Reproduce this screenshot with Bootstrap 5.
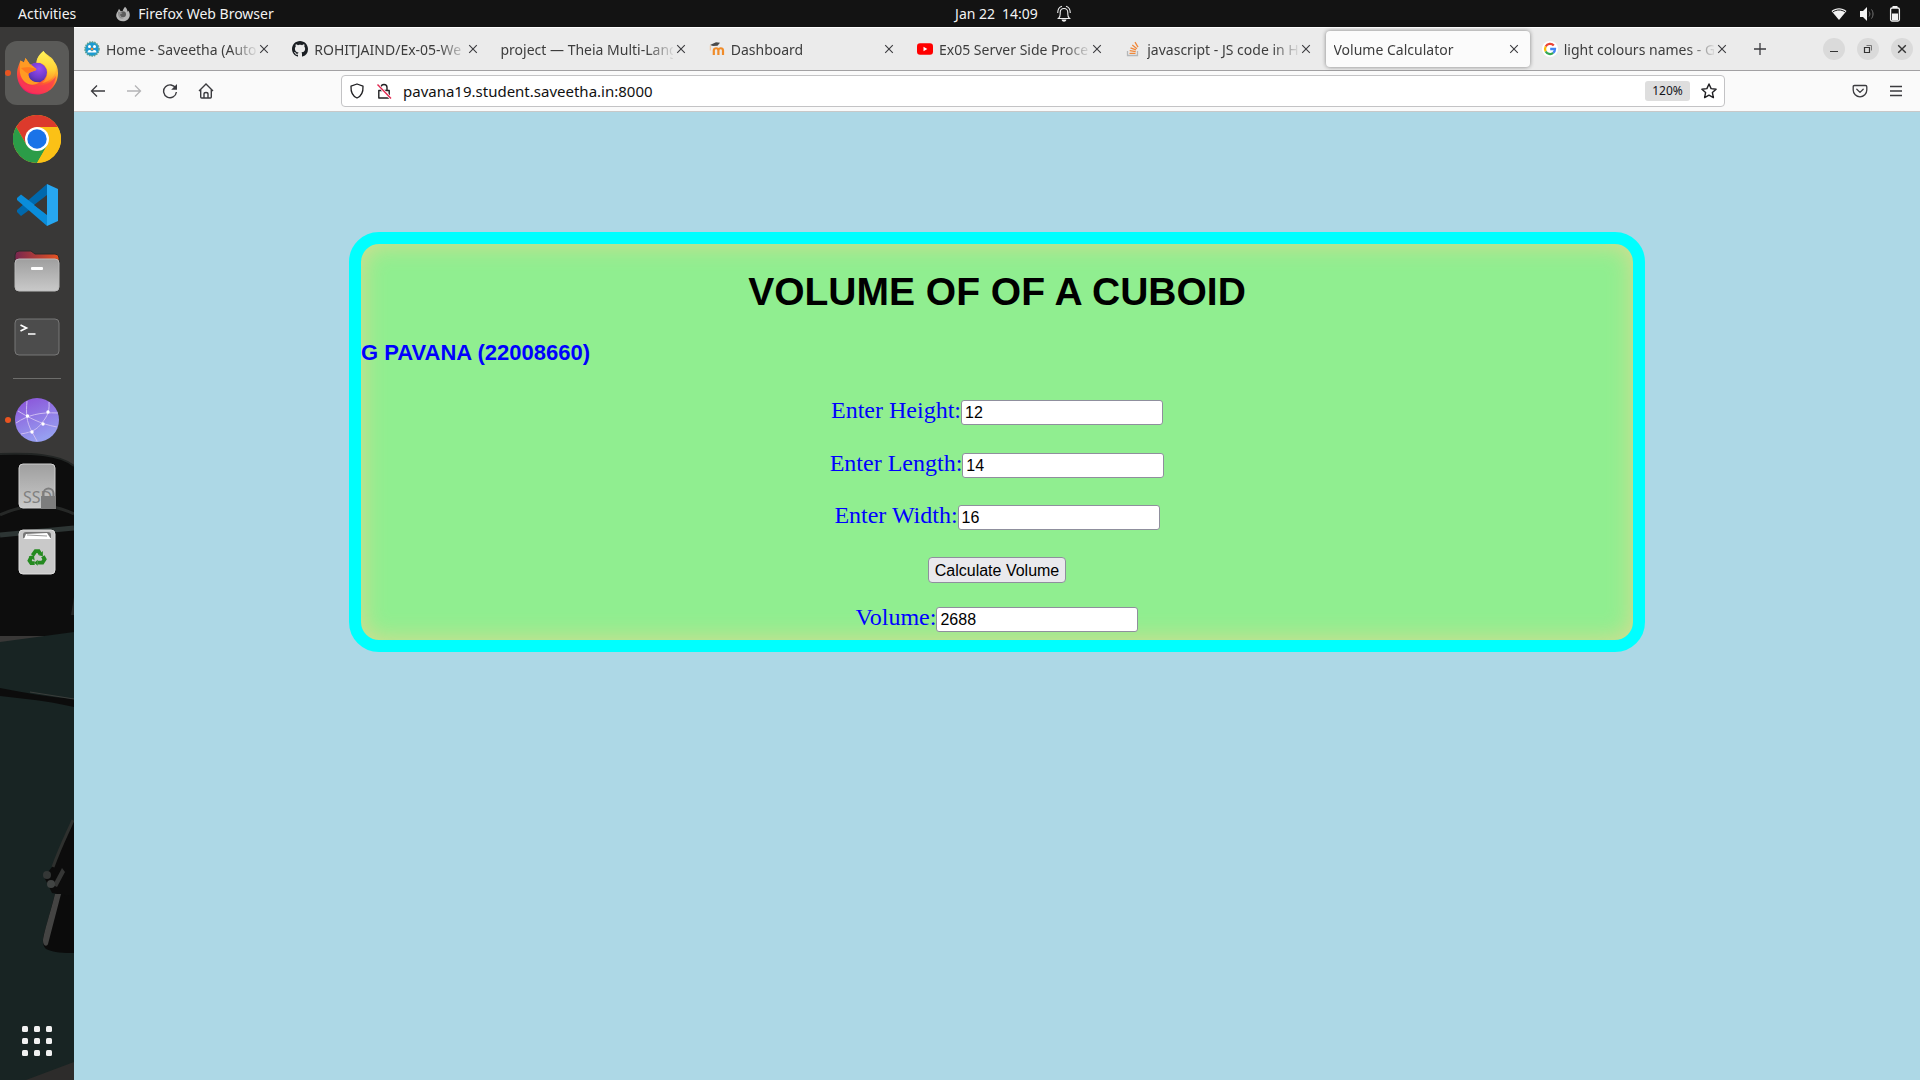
<!DOCTYPE html>
<html lang="en">
<head>
<meta charset="utf-8">
<meta name="viewport" content="width=device-width, initial-scale=1">
<title>Volume Calculator</title>
<link href="https://cdn.jsdelivr.net/npm/bootstrap@5.3.0/dist/css/bootstrap.min.css" rel="stylesheet">
<style>
  body { font-family: "Noto Sans", "Open Sans", sans-serif; font-size: 14px; line-height: 20px; background: #add8e6; }
  svg { display: block; flex: none; }
  button { border: 0; padding: 0; background: none; color: inherit; }

  /* system bar */
  .sysbar { height: 27px; background: #131313; color: #f2f2f2; }
  .sys-left { flex: 1 0 74px; gap: 40px; padding-left: 18px; }
  .sys-mid { gap: 18px; padding-left: 50px; }
  .sys-right { flex: 1 0 0; gap: 12px; padding-right: 17px; }

  /* dock */
  .dock { width: 74px; background: #393837; overflow: hidden; }
  .wallpaper { position: absolute; inset: 0; }
  .dock-items { padding: 13px 0 6px; }
  .dock-item { width: 74px; height: 66px; display: flex; align-items: center; justify-content: center; position: relative; }
  .dock-item.running::before { content: ""; position: absolute; left: 5px; top: 30px; width: 6px; height: 6px; border-radius: 50%; background: #e95420; z-index: 1; }
  .dock-tile { width: 64px; height: 64px; border-radius: 12px; background: #5a5a58; display: flex; align-items: center; justify-content: center; }
  .dock-rule { width: 48px; height: 1px; margin: 8px 0; background: #6d6d6b; }

  /* browser chrome */
  .tabstrip { height: 44px; background: #ebebeb; border-top: 1px solid #fff; border-bottom: 1px solid #a2a1a3; }
  .tab-box { flex: 1 1 0; min-width: 0; height: 36px; margin: 0 2px; padding: 0 8px; border-radius: 4px; color: #3d3d3d; }
  .tab-box > svg { margin-right: 6px; }
  .tab-box.current { background: #fbfbfb; box-shadow: 0 0 4px rgba(0,0,0,.45); }
  .tab-title { flex: 1 1 0; min-width: 0; padding-top: 2px; overflow: hidden; white-space: nowrap; color: inherit; text-decoration: none;
    -webkit-mask-image: linear-gradient(to left, rgba(0,0,0,.1), #000 26px); mask-image: linear-gradient(to left, rgba(0,0,0,.1), #000 26px); }
  .strip-end { width: 180px; padding: 0 7px 0 12px; }
  .win-btns { gap: 12px; }
  .win-btn { width: 22px; height: 22px; border-radius: 50%; background: #dadada; display: flex; align-items: center; justify-content: center; }
  .toolbar { height: 41px; padding: 0 6px; background: #fafafa; border-bottom: 1px solid #c8c8c8; color: #3b3b3f; }
  .tool-btn { width: 36px; height: 32px; display: flex; align-items: center; justify-content: center; flex: none; }
  .tool-gap { width: 117px; flex-shrink: 1; }
  .urlbar { height: 32px; padding: 0 7px; gap: 11px; border: 1px solid #c3c3c5; border-radius: 4px; background: #fff; color: #1f1f22; }
  .urlbar input { border: 0; outline: 0; padding: 0; background: none; color: #111; min-width: 0; font-size: 15px; }
  .zoom-level { width: 45px; height: 20px; border-radius: 3px; background: #dedede; font-size: 12px; line-height: 20px; color: #15141a; }

  /* page */
  .page { background: #add8e6; padding: 120px 24px 24px; }
  .cuboid { max-width: 1296px; padding: 26px 0 9px; border: 12px solid #0ff; border-radius: 30px; background: #90ee90; box-shadow: inset 0 0 24px #e0da90; }
  .cuboid h1 { font: bold 39px/44px "Liberation Sans", Arial, sans-serif; color: #000; margin: 0 0 26px; }
  .cuboid h2 { font: bold 22px/26px "Liberation Sans", Arial, sans-serif; color: #00f; margin: 0 0 30px; }
  .calc-row { height: 28px; margin-bottom: 24px; font: 24px/28px "Liberation Serif", "Times New Roman", serif; color: #00f; }
  .calc-row:first-child { margin-bottom: 25px; }
  .calc-row.calc-action { height: 34px; margin-bottom: 16px; }
  .calc-row:last-child { margin-bottom: 0; }
  .calc-row input { width: 202px; height: 25px; padding: 2px 3px 0; border: 1px solid #8f8f9d; border-radius: 3px; background: #fff; }
  .calc-row input, .calc-row button { font: 16px/20px "Liberation Sans", Arial, sans-serif; color: #000; }
  .calc-row button { height: 26px; padding: 1px 6px 0; border: 1px solid #8f8f9d; border-radius: 4px; background: #e9e9ed; }
</style>
<script src="https://cdn.jsdelivr.net/npm/bootstrap@5.3.0/dist/js/bootstrap.bundle.min.js"></script>
</head>
<body class="d-flex flex-column min-vh-100">

<svg width="0" height="0" class="position-absolute" aria-hidden="true">
  <defs>
    <symbol id="x" viewBox="0 0 16 16"><path d="M4.200 4.200l7.600 7.600M11.800 4.200l-7.600 7.600" stroke="#3b3b3f" stroke-width="1.100" fill="none"/></symbol>
    <linearGradient id="ffBody" x1=".8" y1="0" x2=".3" y2="1"><stop offset="0" stop-color="#fff04f"/><stop offset=".35" stop-color="#ffb52e"/><stop offset=".62" stop-color="#ff5f2e"/><stop offset="1" stop-color="#f0136b"/></linearGradient>
    <radialGradient id="ffOrb" cx=".6" cy=".3" r=".8"><stop offset="0" stop-color="#9a4cf2"/><stop offset=".6" stop-color="#6d39c8"/><stop offset="1" stop-color="#3d2d92"/></radialGradient>
    <linearGradient id="ffFlame" x1=".5" y1="0" x2=".5" y2="1"><stop offset="0" stop-color="#fff45a"/><stop offset=".6" stop-color="#ffd035"/><stop offset="1" stop-color="#ff8a27"/></linearGradient>
    <linearGradient id="grey" x1="0" y1="0" x2="0" y2="1"><stop offset="0" stop-color="#9f9f9f"/><stop offset="1" stop-color="#c9c9c9"/></linearGradient>
    <linearGradient id="folder" x1="0" y1="0" x2="1" y2="0"><stop offset="0" stop-color="#77264f"/><stop offset="1" stop-color="#e65321"/></linearGradient>
    <linearGradient id="web" x1="0" y1="0" x2=".4" y2="1"><stop offset="0" stop-color="#8a4fd8"/><stop offset="1" stop-color="#969ef0"/></linearGradient>
  </defs>
</svg>

<header class="sysbar d-flex align-items-center">
  <div class="sys-left d-flex align-items-center">
    <button type="button">Activities</button>
    <div class="d-flex align-items-center gap-2">
      <svg width="14" height="16" viewBox="0 0 42 44"><path d="M27 0c-4 6-6 8-6 12L14 14 9 6 6 13C1 19 0 25 1 30c3 9 11 14 20 14s18-6 20-15c1-6 0-12-4-17l-2 3C34 8 31 3 27 0z" fill="#b5b5b5"/><circle cx="21" cy="23" r="9" fill="#5c5c5c"/><path d="M6 15c5 0 9 1 14 4-4 5-9 3-9 6 1 6 8 9 13 8-8 7-20-1-18-18z" fill="#8e8e8e"/></svg>
      <button type="button">Firefox Web Browser</button>
    </div>
  </div>
  <div class="sys-mid d-flex align-items-center">
    <span>Jan 22&ensp;14:09</span>
    <svg width="16" height="18" viewBox="0 0 16 18" fill="none" stroke="#eee" stroke-width="1.100"><path d="M2.500 13.500h11c-1.300-1-1.700-2.500-1.700-4.500V7.500C11.800 5 10.300 3.500 8 3.500S4.200 5 4.200 7.500V9c0 2-.4 3.500-1.700 4.500z"/><path d="M1.700 8C1.700 4.500 3 2 6 1.200M14.300 8C14.300 4.500 13 2 10 1.200"/><path d="M6.200 15h3.600c-.3 1.500-3.300 1.500-3.600 0z" fill="#eee"/></svg>
  </div>
  <div class="sys-right d-flex align-items-center justify-content-end">
    <svg width="16" height="16" viewBox="0 0 16 16"><path d="M.5 5C5 1.400 11 1.400 15.500 5L8 14z" fill="#f2f2f2"/><path d="M1.800 6c4-2.700 8.400-2.700 12.400 0" stroke="#131313" fill="none"/></svg>
    <svg width="16" height="16" viewBox="0 0 16 16"><path d="M1 5h3l4-4v14l-4-4H1z" fill="#f2f2f2"/><path d="M10 5.500c1.200 1.500 1.200 3.500 0 5M12.500 3.500c2 2.500 2 6.500 0 9" stroke="#777" fill="none"/></svg>
    <svg width="16" height="16" viewBox="0 0 16 16"><path d="M5.500 0h5v2h-5z" fill="#f2f2f2"/><rect x="3.600" y="2" width="8.800" height="13" rx="1.500" fill="none" stroke="#f2f2f2" stroke-width="1.300"/><path d="M5 7.500h6V14H5z" fill="#f2f2f2"/></svg>
  </div>
</header>

<div class="d-flex flex-grow-1">
  <nav class="dock position-relative flex-shrink-0" aria-label="Dock">
    <svg class="wallpaper" width="74" height="1053" viewBox="0 27 74 1053">
      <rect y="27" width="74" height="430" fill="#393837"/>
      <path d="M0 454c30-1 60 0 74 12v170H0z" fill="#0d0d0d"/>
      <path d="M0 454c30-1 60 0 74 12" stroke="#222524" stroke-width="2" fill="none"/>
      <path d="M0 515c25-12 52-12 74-1" stroke="#262827" stroke-width="3" fill="none"/>
      <path d="M0 535l74-7" stroke="#2d3534" stroke-width="5"/>
      <path d="M74 597v18l-3 0z" fill="#252525"/>
      <path d="M0 642l74-10v448H0z" fill="#182423"/>
      <path d="M0 688c25 5 50 9 74 11v8c-30-7-50-8-74-11z" fill="#0c0c0c"/>
      <path d="M30 692l44 7" stroke="#3b3e3c"/>
      <path d="M74 820c-6 14-13 27-22 47l-8 10 8 16 22 4z" fill="#0c0c0c"/>
      <path d="M73 820c-6 14-12 25-20 47" stroke="#2e302e" stroke-width="3" fill="none"/>
      <path d="M62 868l3 4-8 15-4-2z" fill="#353635"/>
      <circle cx="47" cy="875" r="4" fill="#343736"/><circle cx="51" cy="884" r="4" fill="#414443"/>
      <path d="M55 894l19 2v57c-10 0-20 0-28-4-3-3-4-8-2-15z" fill="#0b0b0b"/>
      <path d="M55 894h6l-13 50c-1 3-5 2-5-3 0-6 7-27 12-47z" fill="#444443"/>
      <path d="M26 1080l48-18v18z" fill="#2d2c2b"/>
    </svg>
    <div class="dock-items position-relative d-flex flex-column align-items-center h-100">
      <button type="button" class="dock-item running" aria-label="Firefox"><span class="dock-tile">
        <svg width="42" height="44" viewBox="0 0 42 44">
          <path d="M27.500 0C23 4 20.500 8 20.500 12L14 13.500 9.500 7 8 11.500 4.500 9.500C3 13 2.500 15 1.500 18-1 30 6 43.500 21 43.500 33 43.500 42 34 42 22c0-5-1.500-9-4-11.500C37 6 31 5 27.500 0z" fill="url(#ffBody)"/>
          <circle cx="21" cy="21.500" r="10" fill="url(#ffOrb)"/>
          <path d="M27.500 0C22.500 4 20.500 8 20.500 12c5-1 9 2 10.500 6 1.500 6-1 11-5 14 8-1 14-7 14-15 0-3-1-5-2.500-7C34 7 30 5 27.500 0z" fill="url(#ffFlame)"/>
          <path d="M4.500 9.500L8 11.500 9.500 7 14 13.500c3 .5 4 3 6.500 4.500-1 3-7 2-8 5 0 6 6 9 11 8C17 37 6 33 4 22c-.6-4 0-8 .5-12.500z" fill="#ff9a23"/>
          <path d="M5 17c5-1 10-1 15.500 1-1 3-7 2-8 5C9 21 7 19 5 17z" fill="#ff7a1f"/>
          <path d="M2 24c2 8 9 11 15 11 8 1 18-2 23-10-1 10-9 17.500-19 17.500S3 36 2 24z" fill="#fb3a52" opacity=".7"/>
        </svg></span></button>
      <button type="button" class="dock-item" aria-label="Chrome">
        <svg width="48" height="48" viewBox="0 0 48 48"><circle cx="24" cy="24" r="24" fill="#fbc116"/><path d="M3.200 12a24 24 0 0 1 41.600 0H24L13.600 30z" fill="#dc3a2c"/><path d="M3.200 12a24 24 0 0 0 20.800 36l10.400-18-20.800 0z" fill="#2b9c48"/><path d="M24 12h20.800A24 24 0 0 1 24 48l10.400-18z" fill="#fbc116"/><circle cx="24" cy="24" r="12" fill="#fff"/><circle cx="24" cy="24" r="9.700" fill="#1a73e8"/></svg></button>
      <button type="button" class="dock-item" aria-label="Visual Studio Code">
        <svg width="42" height="42" viewBox="0 0 42 42"><path d="M1 28l4 4 26-19V0L1 26z" fill="#0068ac"/><path d="M1 14l4-3.500 26 20V42L1 16z" fill="#0a8ddb"/><path d="M31 0l11 5v32l-11 5z" fill="#27a7f1"/><path d="M31 11v20L18 21z" fill="#393837"/></svg></button>
      <button type="button" class="dock-item" aria-label="Files">
        <svg width="46" height="42" viewBox="0 0 46 42"><path d="M1 5q0-4 4-4h12l4 3h20q4 0 4 4v14H1z" fill="url(#folder)" stroke="#2a2a2a"/><rect x="1" y="9" width="44" height="32" rx="4" fill="url(#grey)" stroke="#bbb"/><rect x="17" y="17" width="12" height="3" rx="1" fill="#fff"/></svg></button>
      <button type="button" class="dock-item" aria-label="Terminal">
        <svg width="46" height="38" viewBox="0 0 46 38"><rect x="1" y="1" width="44" height="36" rx="4" fill="#4c4c4c" stroke="#777"/><path d="M6.500 7l6 3-6 3" stroke="#fff" stroke-width="1.700" fill="none"/><path d="M14 16h7.500" stroke="#fff" stroke-width="1.500"/></svg></button>
      <div class="dock-rule flex-shrink-0"></div>
      <button type="button" class="dock-item running" aria-label="Web">
        <svg width="46" height="46" viewBox="0 0 46 46"><circle cx="23" cy="23" r="22" fill="url(#web)"/><g stroke="#cdbcf2" fill="none"><path d="M13 4c-1 12-1 20 5 31l5 9M35 5c1 12-4 17-8 22-4 5-8 8-20 10M2 26c12-8 24-11 42-10M4 14c10 6 22 13 39 16"/></g><g fill="#fff"><circle cx="13.500" cy="19" r="1.700"/><circle cx="34" cy="15" r="1.700"/><circle cx="29" cy="27" r="1.700"/><circle cx="18" cy="35" r="1.700"/></g></svg></button>
      <button type="button" class="dock-item" aria-label="SSD drive">
        <svg width="42" height="46" viewBox="0 0 42 46"><rect x="3" y="1" width="36" height="44" rx="4" fill="url(#grey)" stroke="#d0d0d0"/><text x="7" y="39.500" font-family="Noto Sans, sans-serif" font-size="16" fill="#808080">SSD</text><rect x="25" y="33" width="15" height="13" fill="#7d7d7d"/><path d="M27.500 34v-3.500a5 5 0 0 1 10 0V34" stroke="#7d7d7d" stroke-width="2" fill="none"/></svg></button>
      <button type="button" class="dock-item" aria-label="Rubbish bin">
        <svg width="38" height="46" viewBox="0 0 38 46"><rect x="1" y="1" width="36" height="44" rx="4" fill="#c9c9c9" stroke="#dedede"/><path d="M5 9V6q0-3 3-3h22q3 0 3 3v3z" fill="#777"/><path d="M6 10l2-5 21-1 4 6z" fill="#fff"/><path d="M9 6l20 1" stroke="#999"/><g transform="translate(2.500 4) scale(.86)"><g fill="none" stroke="#258a20" stroke-width="4.500"><path d="M14 26l3.500-5h3.500l2 3.500"/><path d="M26 27l2 3.500-2.500 4H20"/><path d="M16.500 35h-4l-2-3 2-4"/></g><path d="M21 26l5 1V21zM20 31v7l-4-3.500zM9.500 27l6-1 1 6z" fill="#258a20"/></g></svg></button>
      <button type="button" class="dock-item mt-auto" aria-label="Show applications">
        <svg width="30" height="30" viewBox="0 0 30 30" fill="#f1f1f1"><rect width="6" height="6" rx="1.500"/><rect x="12" width="6" height="6" rx="1.500"/><rect x="24" width="6" height="6" rx="1.500"/><rect y="12" width="6" height="6" rx="1.500"/><rect x="12" y="12" width="6" height="6" rx="1.500"/><rect x="24" y="12" width="6" height="6" rx="1.500"/><rect y="24" width="6" height="6" rx="1.500"/><rect x="12" y="24" width="6" height="6" rx="1.500"/><rect x="24" y="24" width="6" height="6" rx="1.500"/></svg></button>
    </div>
  </nav>

  <div class="d-flex flex-column flex-grow-1 overflow-hidden">
    <div class="tabstrip d-flex align-items-center">
      <div class="d-flex flex-grow-1 h-100 align-items-center">
        <div class="tab-box d-flex align-items-center">
          <svg width="16" height="16" viewBox="0 0 16 16"><circle cx="8" cy="8" r="7" fill="#1d9bd1" stroke="#5f9f8c" stroke-width="1.600" stroke-dasharray="1.500 1"/><circle cx="5.500" cy="5.500" r="1.500" fill="#fff"/><circle cx="10.500" cy="5.500" r="1.500" fill="#fff"/><path d="M3.500 11.500c.5-3 2.500-3 4.500-1 2-2 4-2 4.500 1z" fill="#fff"/><circle cx="8" cy="8" r="1.300" fill="#e48a3c"/></svg>
          <a href="#" class="tab-title">Home - Saveetha (Auto</a>
          <button type="button" aria-label="Close tab"><svg width="16" height="16"><use href="#x"/></svg></button>
        </div>
        <div class="tab-box d-flex align-items-center">
          <svg width="16" height="16" viewBox="0 0 16 16" fill="#1b1f23"><path d="M8 0C3.580 0 0 3.580 0 8c0 3.540 2.290 6.530 5.470 7.590.4.070.55-.17.55-.38 0-.19-.01-.82-.01-1.490-2.010.37-2.530-.49-2.690-.94-.09-.23-.48-.94-.82-1.130-.28-.15-.68-.52-.01-.53.63-.01 1.080.58 1.230.82.72 1.210 1.870.87 2.330.66.070-.52.28-.87.51-1.070-1.780-.2-3.640-.89-3.640-3.950 0-.87.31-1.590.82-2.150-.08-.2-.36-1.020.08-2.120 0 0 .67-.21 2.200.82.64-.18 1.320-.27 2-.27s1.360.09 2 .27c1.530-1.040 2.200-.82 2.200-.82.44 1.100.16 1.920.08 2.120.51.56.82 1.270.82 2.150 0 3.070-1.870 3.750-3.650 3.950.29.25.54.73.54 1.480 0 1.070-.01 1.930-.01 2.200 0 .21.15.46.55.38A8.010 8.010 0 0 0 16 8c0-4.420-3.580-8-8-8z"/></svg>
          <a href="#" class="tab-title">ROHITJAIND/Ex-05-We</a>
          <button type="button" aria-label="Close tab"><svg width="16" height="16"><use href="#x"/></svg></button>
        </div>
        <div class="tab-box d-flex align-items-center">
          <a href="#" class="tab-title">project — Theia Multi-Lang</a>
          <button type="button" aria-label="Close tab"><svg width="16" height="16"><use href="#x"/></svg></button>
        </div>
        <div class="tab-box d-flex align-items-center">
          <svg width="16" height="16" viewBox="0 0 16 16" fill="none"><path d="M4.800 14V9M4.800 9.500c0-3 4.600-3 4.600 0V14M9.400 9.500c0-3 4.600-3 4.600 0V14" stroke="#f08c2a" stroke-width="2.200"/><path d="M1 4l6-2.800 4 .6-2.500 3L4 5z" fill="#4a4a4a"/><path d="M1.300 4.500v5" stroke="#f5c492"/></svg>
          <a href="#" class="tab-title">Dashboard</a>
          <button type="button" aria-label="Close tab"><svg width="16" height="16"><use href="#x"/></svg></button>
        </div>
        <div class="tab-box d-flex align-items-center">
          <svg width="16" height="16" viewBox="0 0 16 16"><rect y="2.300" width="16" height="11.400" rx="3" fill="#f00"/><path d="M6.500 5.700v4.600L10.300 8z" fill="#fff"/></svg>
          <a href="#" class="tab-title">Ex05 Server Side Proce</a>
          <button type="button" aria-label="Close tab"><svg width="16" height="16"><use href="#x"/></svg></button>
        </div>
        <div class="tab-box d-flex align-items-center">
          <svg width="16" height="16" viewBox="0 0 16 16" fill="none"><path d="M2.500 10v4.500h10V10" stroke="#b5b7b9" stroke-width="1.300"/><path d="M4.500 12.300h6M4.700 9.700l6 .9M5.500 6.900l5.500 2M7.300 4l4.600 3.700M10 1.200l3 5" stroke="#f0883a" stroke-width="1.300"/></svg>
          <a href="#" class="tab-title">javascript - JS code in H</a>
          <button type="button" aria-label="Close tab"><svg width="16" height="16"><use href="#x"/></svg></button>
        </div>
        <div class="tab-box current d-flex align-items-center">
          <a href="#" class="tab-title" aria-current="page">Volume Calculator</a>
          <button type="button" aria-label="Close tab"><svg width="16" height="16"><use href="#x"/></svg></button>
        </div>
        <div class="tab-box d-flex align-items-center">
          <svg width="16" height="16" viewBox="0 0 16 16"><circle cx="8" cy="8" r="8" fill="#fff"/><g fill="none" stroke-width="2.300"><path d="M11.800 4.600A5 5 0 0 0 3.700 5.500" stroke="#ea4335"/><path d="M3.700 5.500a5 5 0 0 0 0 5" stroke="#fbbc05"/><path d="M3.700 10.500a5 5 0 0 0 7.500 1.400" stroke="#34a853"/><path d="M11.200 11.900A5 5 0 0 0 13 8H8.200" stroke="#4285f4"/></g></svg>
          <a href="#" class="tab-title">light colours names - G</a>
          <button type="button" aria-label="Close tab"><svg width="16" height="16"><use href="#x"/></svg></button>
        </div>
      </div>
      <div class="strip-end flex-shrink-0 d-flex align-items-center justify-content-between">
        <button type="button" aria-label="New tab"><svg width="16" height="16" viewBox="0 0 16 16"><path d="M8 2v12M2 8h12" stroke="#3b3b3f" stroke-width="1.300"/></svg></button>
        <div class="win-btns d-flex">
          <button type="button" class="win-btn" aria-label="Minimise"><svg width="10" height="10" viewBox="0 0 10 10"><path d="M1 7.500h8" stroke="#333"/></svg></button>
          <button type="button" class="win-btn" aria-label="Restore"><svg width="10" height="10" viewBox="0 0 10 10" fill="none"><path d="M1.500 3.500h5v5h-5z" stroke="#333" stroke-width="1.200"/><path d="M3.500 1.500h5v5" stroke="#777"/></svg></button>
          <button type="button" class="win-btn" aria-label="Close window"><svg width="10" height="10" viewBox="0 0 10 10"><path d="M1.200 1.200l7.600 7.600M8.800 1.200L1.200 8.800" stroke="#333" stroke-width="1.400"/></svg></button>
        </div>
      </div>
    </div>

    <div class="toolbar d-flex align-items-center">
      <button type="button" class="tool-btn" aria-label="Back"><svg width="16" height="16" viewBox="0 0 16 16" fill="none" stroke="currentColor" stroke-width="1.300"><path d="M15 8H1.500M7 2.500L1.500 8 7 13.500"/></svg></button>
      <button type="button" class="tool-btn" aria-label="Forward"><svg width="16" height="16" viewBox="0 0 16 16" fill="none" stroke="#b4b4b6" stroke-width="1.300"><path d="M1 8h13.500M9 2.500L14.500 8 9 13.500"/></svg></button>
      <button type="button" class="tool-btn" aria-label="Reload"><svg width="16" height="16" viewBox="0 0 16 16"><path d="M13.800 5.500A6.400 6.400 0 1 0 14.400 9" fill="none" stroke="currentColor" stroke-width="1.400"/><path d="M15 1v5.800H9.200z" fill="currentColor"/></svg></button>
      <button type="button" class="tool-btn" aria-label="Home"><svg width="16" height="16" viewBox="0 0 16 16" fill="none" stroke="currentColor" stroke-width="1.400"><path d="M1 8l7-7 7 7M2.700 6.500V14q0 1 1 1h8.600q1 0 1-1V6.500M6 15v-4q0-1.500 2-1.500t2 1.500v4"/></svg></button>
      <div class="tool-gap"></div>
      <div class="urlbar flex-grow-1 d-flex align-items-center">
        <svg width="16" height="16" viewBox="0 0 16 16" fill="none" stroke="currentColor" stroke-width="1.300"><path d="M8 1l6 2.200c.3 5.500-1.500 9.800-6 11.800C3.500 13 1.700 8.700 2 3.200z" stroke-linejoin="round"/></svg>
        <svg width="16" height="16" viewBox="0 0 16 16" fill="none"><path d="M2.800 7.500h10.400V15H2.800zM5 7.500V4.500a3 3 0 0 1 6 0v3" stroke="currentColor" stroke-width="1.400" stroke-linejoin="round"/><path d="M1.500 1.500l13.500 14" stroke="#fff" stroke-width="3"/><path d="M1.500 1.500l13.500 14" stroke="#e22850" stroke-width="1.400"/></svg>
        <input type="text" class="flex-grow-1" value="pavana19.student.saveetha.in:8000" aria-label="Address">
        <button type="button" class="zoom-level flex-shrink-0">120%</button>
        <button type="button" aria-label="Bookmark"><svg width="16" height="16" viewBox="0 0 16 16" fill="none" stroke="currentColor" stroke-width="1.400" stroke-linejoin="round"><path d="M8 1l2.100 4.600 5 .6-3.700 3.400 1 5L8 12.100l-4.400 2.500 1-5L.9 6.200l5-.6z"/></svg></button>
      </div>
      <div class="tool-gap"></div>
      <button type="button" class="tool-btn" aria-label="Pocket"><svg width="16" height="16" viewBox="0 0 16 16" fill="none" stroke="currentColor" stroke-width="1.300"><path d="M2.500 2.500h11q1.300 0 1.300 1.300V7a6.800 6.800 0 0 1-13.600 0V3.800q0-1.300 1.300-1.300zM4.800 6.300L8 9.400l3.200-3.100" stroke-linejoin="round" stroke-linecap="round"/></svg></button>
      <button type="button" class="tool-btn" aria-label="Menu"><svg width="16" height="16" viewBox="0 0 16 16" stroke="currentColor" stroke-width="1.300"><path d="M2 3.500h12M2 8h12M2 12.500h12"/></svg></button>
    </div>

    <main class="page flex-grow-1">
      <section class="cuboid mx-auto">
        <h1 class="text-center">VOLUME OF OF A CUBOID</h1>
        <h2>G PAVANA (22008660)</h2>
        <form>
          <div class="calc-row d-flex justify-content-center align-items-baseline"><label for="height">Enter Height:</label><input type="text" id="height" value="12"></div>
          <div class="calc-row d-flex justify-content-center align-items-baseline"><label for="length">Enter Length:</label><input type="text" id="length" value="14"></div>
          <div class="calc-row d-flex justify-content-center align-items-baseline"><label for="width">Enter Width:</label><input type="text" id="width" value="16"></div>
          <div class="calc-row calc-action d-flex justify-content-center align-items-center"><button type="button">Calculate Volume</button></div>
          <div class="calc-row d-flex justify-content-center align-items-baseline"><label for="volume">Volume:</label><input type="text" id="volume" value="2688"></div>
        </form>
      </section>
    </main>
  </div>
</div>
</body>
</html>
